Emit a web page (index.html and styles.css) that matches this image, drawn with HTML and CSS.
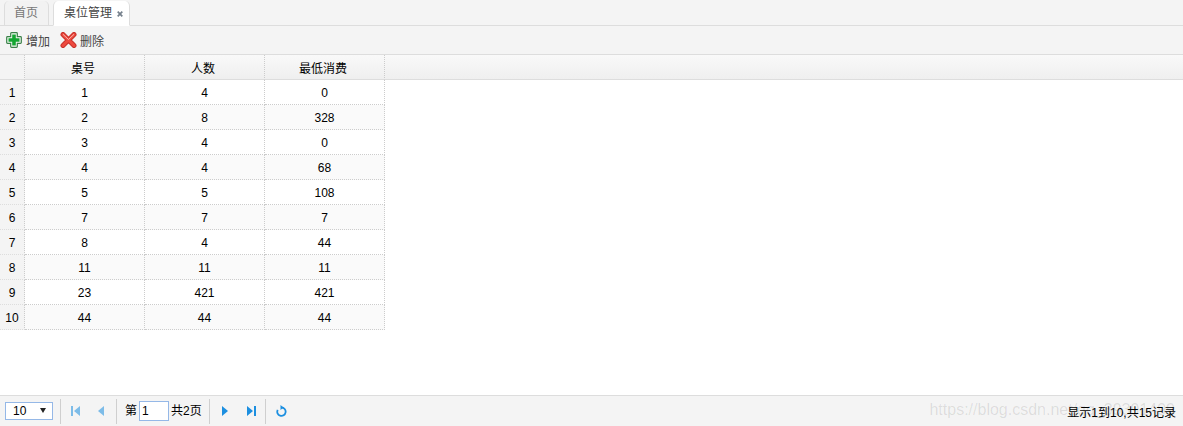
FILE: index.html
```html
<!DOCTYPE html>
<html lang="zh-CN">
    <head>
        <meta charset="utf-8">
        <link rel="stylesheet" href="styles.css">
        <title>桌位管理</title>
    </head>
    <body>
        <div class="page">
            <div class="tabs">
                <div class="tab">首页</div>
                <div class="tab tab-active">桌位管理<svg class="tab-close" width="6" height="6" viewBox="0 0 6 6"><path d="M.7 .7l4.600 4.600M5.300 .7l-4.600 4.600" fill="none" stroke="#75808c" stroke-width="1.700"/></svg></div>
            </div>
            <div class="toolbar">
                <a class="tool">
                    <svg class="tool-icon" width="16" height="16" viewBox="0 0 16 16"><path d="M5.500 .7h5q.8 0 .8 .8v3.200h3.200q.8 0 .8 .8v5q0 .8-.8 .8h-3.200v3.200q0 .8-.8 .8h-5q-.8 0-.8-.8v-3.200h-3.200q-.8 0-.8-.8v-5q0-.8 .8-.8h3.200v-3.200q0-.8 .8-.8z" fill="#f4faf4" stroke="#3a8048" stroke-width="1.200"/><path d="M6.200 2.500h3.600v3.700h3.700v3.600h-3.700v3.700h-3.600v-3.700h-3.700v-3.600h3.700z" fill="#13a531"/></svg>
                    增加
                </a>
                <a class="tool tool-del">
                    <svg class="tool-icon" width="17" height="16" viewBox="0 0 17 16"><path d="M3 2.500l11 11M14 2.500l-11 11" fill="none" stroke="#c8332c" stroke-width="5" stroke-linecap="round"/><path d="M3 2.500l11 11M14 2.500l-11 11" fill="none" stroke="#ee4a3f" stroke-width="3" stroke-linecap="round"/><path d="M3 2.300l5.500 5.200 5.500-5.200" fill="none" stroke="#f8b4ac" stroke-width="1"/></svg>
                    删除
                </a>
            </div>
            <div class="grid-wrap">
                <table class="grid">
                    <thead>
                        <tr>
                            <th class="rownum"></th>
                            <th>桌号</th>
                            <th>人数</th>
                            <th>最低消费</th>
                        </tr>
                    </thead>
                    <tbody>
                        <tr><td class="rownum">1</td><td>1</td><td>4</td><td>0</td></tr>
                        <tr><td class="rownum">2</td><td>2</td><td>8</td><td>328</td></tr>
                        <tr><td class="rownum">3</td><td>3</td><td>4</td><td>0</td></tr>
                        <tr><td class="rownum">4</td><td>4</td><td>4</td><td>68</td></tr>
                        <tr><td class="rownum">5</td><td>5</td><td>5</td><td>108</td></tr>
                        <tr><td class="rownum">6</td><td>7</td><td>7</td><td>7</td></tr>
                        <tr><td class="rownum">7</td><td>8</td><td>4</td><td>44</td></tr>
                        <tr><td class="rownum">8</td><td>11</td><td>11</td><td>11</td></tr>
                        <tr><td class="rownum">9</td><td>23</td><td>421</td><td>421</td></tr>
                        <tr><td class="rownum">10</td><td>44</td><td>44</td><td>44</td></tr>
                    </tbody>
                </table>
            </div>
            <div class="pager">
                <div class="page-size">10 <span class="page-size-arrow"></span></div>
                <span class="sep"></span>
                <svg class="pg-icon faded" width="12" height="12" viewBox="0 0 12 12"><path d="M1 1h2v10h-2zM10 1v10l-6-5z" fill="#1c8fe0"/></svg>
                <svg class="pg-icon faded" width="12" height="12" viewBox="0 0 12 12"><path d="M9 1v10l-6-5z" fill="#1c8fe0"/></svg>
                <span class="sep"></span>
                <span class="pg-label">第</span>
                <div class="page-input">1</div>
                <span class="pg-label">共2页</span>
                <span class="sep"></span>
                <svg class="pg-icon" width="12" height="12" viewBox="0 0 12 12"><path d="M3 1v10l6-5z" fill="#1c8fe0"/></svg>
                <svg class="pg-icon" width="12" height="12" viewBox="0 0 12 12"><path d="M10 1h2v10h-2zM3 1v10l6-5z" fill="#1c8fe0"/></svg>
                <span class="sep"></span>
                <svg class="pg-icon" width="12" height="12" viewBox="0 0 12 12"><path d="M6.500 2.500a4.200 4.200 0 1 1-3.800 2.300" fill="none" stroke="#1c8fe0" stroke-width="1.800"/><path d="M5.500 0v5l3-2.500z" fill="#1c8fe0"/></svg>
                <div class="pg-info">显示1到10,共15记录</div>
            </div>
            <div class="watermark">https://blog.csdn.net/qq_39391499</div>
        </div>
    </body>
</html>
```

FILE: styles.css
```css
html, body {
  margin: 0;
  padding: 0;
}
body {
  background-color: white;
  color: #000;
  font-family: "Liberation Sans", "Noto Sans CJK SC", sans-serif;
  font-size: 12px;
}
.page {
  position: relative;
  height: 426px;
  display: flex;
  flex-direction: column;
  overflow: hidden;
}
.tabs {
  height: 25px;
  flex-shrink: 0;
  display: flex;
  gap: 4px;
  padding-left: 4px;
  align-items: flex-end;
  background-color: #f4f4f4;
  border-bottom: 1px solid #dddddd;
}
.tab {
  height: 25px;
  margin-bottom: -1px;
  padding: 0 10px 0 9px;
  line-height: 25px;
  color: #777;
  background-color: #f2f2f2;
  border: 1px solid #dddddd;
  border-top: 0;
  border-radius: 5px 5px 0 0;
  box-sizing: border-box;
}
.tab-active {
  padding: 0 6px 0 10px;
  color: #444;
  background-color: white;
  border-bottom-color: white;
}
.tab-close {
  margin-left: 5px;
  vertical-align: 0;
}
.toolbar {
  height: 28px;
  flex-shrink: 0;
  display: flex;
  align-items: center;
  gap: 10px;
  padding-left: 6px;
  background-color: #f4f4f4;
  border-bottom: 1px solid #dddddd;
}
.tool {
  display: flex;
  align-items: center;
  gap: 4px;
  color: #444;
}
.tool-del {
  gap: 3px;
}
/* header strip runs the full width, past the last column */
.grid-wrap {
  flex: 1;
  background:
    linear-gradient(to bottom, #f9f9f9, #efefef) no-repeat 0 0 / 100% 24px,
    linear-gradient(#dddddd, #dddddd) no-repeat 0 24px / 100% 1px,
    white;
}
.grid {
  width: 385px;
  border-collapse: separate;
  border-spacing: 0;
  table-layout: fixed;
}
.grid th {
  width: 116px;
  height: 24px;
  padding: 0 3px 0 0;
  font-weight: normal;
  color: #000;
  background: linear-gradient(to bottom, #f9f9f9, #efefef);
  border-right: 1px dotted #cccccc;
  border-bottom: 1px solid #dddddd;
  text-align: center;
}
.grid td {
  height: 23px;
  padding: 1px 0 0 0;
  text-align: center;
  border-right: 1px dotted #cccccc;
  border-bottom: 1px dotted #cccccc;
}
.grid th.rownum, .grid td.rownum {
  width: 24px;
  padding-left: 0;
  padding-right: 0;
  background: #f4f4f4;
  border-bottom-color: #dddddd;
}
.grid tbody tr:nth-child(even) td {
  background-color: #fafafa;
}
.grid tbody tr:nth-child(even) td.rownum {
  background-color: #f4f4f4;
}
.pager {
  height: 30px;
  flex-shrink: 0;
  display: flex;
  align-items: center;
  padding: 0 7px 0 5px;
  background-color: #f4f4f4;
  border-top: 1px solid #dddddd;
}
.page-size {
  width: 48px;
  height: 18px;
  padding-left: 7px;
  line-height: 16px;
  box-sizing: border-box;
  background-color: white;
  border: 1px solid #95b8e7;
  position: relative;
}
.page-size-arrow {
  position: absolute;
  right: 6px;
  top: 5px;
  border-left: 3px solid transparent;
  border-right: 3px solid transparent;
  border-top: 5px solid #222;
}
.sep {
  width: 1px;
  height: 25px;
  background-color: #cfcfcf;
  margin: 0 7px;
}
.pg-icon {
  margin: 0 2px;
}
.pg-icon + .pg-icon {
  margin-left: 11px;
}
.faded {
  opacity: 0.55;
}
.pg-label {
  line-height: 18px;
}
.sep + .pg-label {
  margin-left: 1px;
}
.page-input {
  width: 30px;
  height: 20px;
  margin: 0 2px;
  padding-left: 2px;
  line-height: 18px;
  box-sizing: border-box;
  background-color: white;
  border: 1px solid #95b8e7;
}
.pg-info {
  margin-left: auto;
}
.watermark {
  position: absolute;
  right: 8px;
  bottom: 7px;
  font-size: 16px;
  color: rgba(0, 0, 0, 0.1);
  white-space: nowrap;
}
```
